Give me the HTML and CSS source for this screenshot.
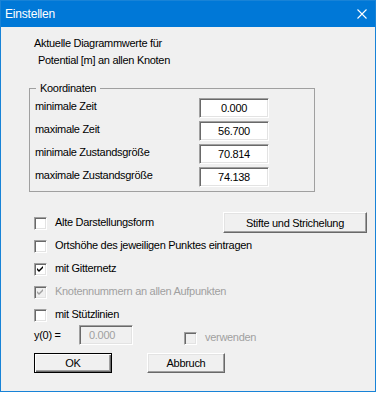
FILE: index.html
```html
<!DOCTYPE html>
<html lang="de">
<head>
    <meta charset="UTF-8">
    <meta name="viewport" content="width=device-width, initial-scale=1.0">
    <title>Einstellen</title>
    <link rel="stylesheet" href="styles.css">
</head>
<body>
    <div class="window">
        <div class="titlebar">
            <span class="title">Einstellen</span>
            <svg class="close" width="10" height="10" viewBox="0 0 10 10">
                <path d="M0.5 0.5 L9.5 9.5 M9.5 0.5 L0.5 9.5" stroke="#fff" stroke-width="1.1" fill="none"/>
            </svg>
        </div>

        <div class="content">
            <p class="intro">Aktuelle Diagrammwerte für</p>
            <p class="intro intro-sub">Potential [m] an allen Knoten</p>

            <fieldset class="group">
                <legend>Koordinaten</legend>
                <div class="field-row">
                    <span class="field-label">minimale Zeit</span>
                    <span class="field-box">0.000</span>
                </div>
                <div class="field-row">
                    <span class="field-label">maximale Zeit</span>
                    <span class="field-box">56.700</span>
                </div>
                <div class="field-row">
                    <span class="field-label">minimale Zustandsgröße</span>
                    <span class="field-box">70.814</span>
                </div>
                <div class="field-row">
                    <span class="field-label">maximale Zustandsgröße</span>
                    <span class="field-box">74.138</span>
                </div>
            </fieldset>

            <div class="options">
                <div class="option-row">
                    <label class="check"><span class="box"></span><span class="check-text">Alte Darstellungsform</span></label>
                    <button type="button" class="btn btn-wide">Stifte und Strichelung</button>
                </div>
                <div class="option-row">
                    <label class="check"><span class="box"></span><span class="check-text">Ortshöhe des jeweiligen Punktes eintragen</span></label>
                </div>
                <div class="option-row">
                    <label class="check">
                        <span class="box">
                            <svg width="9" height="9" viewBox="0 0 9 9"><polygon points="1,3 3,5 7,1 7,3 3,7 1,5" fill="#000"/></svg>
                        </span>
                        <span class="check-text">mit Gitternetz</span>
                    </label>
                </div>
                <div class="option-row">
                    <label class="check disabled">
                        <span class="box">
                            <svg width="9" height="9" viewBox="0 0 9 9"><polygon points="1,3 3,5 7,1 7,3 3,7 1,5" fill="#a0a0a0"/></svg>
                        </span>
                        <span class="check-text">Knotennummern an allen Aufpunkten</span>
                    </label>
                </div>
                <div class="option-row">
                    <label class="check"><span class="box"></span><span class="check-text">mit Stützlinien</span></label>
                </div>
            </div>

            <div class="start-row">
                <span class="start-label">y(0) =</span>
                <span class="field-box field-disabled">0.000</span>
                <label class="check disabled start-check"><span class="box"></span><span class="check-text">verwenden</span></label>
            </div>

            <div class="actions">
                <button type="button" class="btn btn-default">OK</button>
                <button type="button" class="btn">Abbruch</button>
            </div>
        </div>
    </div>
</body>
</html>
```

FILE: styles.css
```css
body {
    margin: 0;
    background-color: #fff;
    font-family: "Liberation Sans", Arial, sans-serif;
    font-size: 11px;
    letter-spacing: -0.3px;
    color: #000;
}

.window {
    width: 376px;
    height: 392px;
    box-sizing: border-box;
    border: 1px solid #1883d7;
    background-color: #f0f0f0;
}

.titlebar {
    height: 26px;
    background-color: #0078d7;
    display: flex;
    align-items: center;
    justify-content: space-between;
    padding: 0 8px 0 4px;
    color: #fff;
}

.title {
    font-size: 12px;
    letter-spacing: -0.2px;
    margin-top: -1px;
}

.close {
    display: block;
    margin-top: -1px;
}

.content {
    padding: 8px 8px 0 33px;
}

.intro {
    margin: 0;
    line-height: 17px;
}

.intro-sub {
    padding-left: 4px;
}

/* group box */
.group {
    box-sizing: border-box;
    width: 286px;
    margin: 12px 0 0 -5px;
    padding: 2px 5px 4px;
    border: 1px solid #a0a0a0;
    min-width: 0;
}

.group legend {
    margin-left: 1px;
    padding: 0 4px;
    line-height: 15px;
}

.field-row {
    display: grid;
    grid-template-columns: 164px 70px;
    align-items: start;
}

.field-row + .field-row {
    margin-top: 3px;
}

.field-label {
    line-height: 17px;
}

.field-box {
    display: block;
    box-sizing: border-box;
    height: 20px;
    line-height: 18px;
    text-align: center;
    background-color: #fff;
    border: 1px solid;
    border-color: #a0a0a0 #fff #fff #a0a0a0;
    box-shadow: inset 1px 1px #696969, inset -1px -1px #e3e3e3;
}

/* checkboxes */
.options {
    margin-top: 20px;
}

.option-row {
    display: flex;
    align-items: center;
    height: 23px;
}

.check {
    display: flex;
    align-items: center;
    gap: 8px;
}

.check-text {
    line-height: 13px;
    padding-bottom: 2px;
}

.box {
    width: 13px;
    height: 13px;
    box-sizing: border-box;
    padding: 1px;
    background-color: #fff;
    border: 1px solid;
    border-color: #a0a0a0 #fff #fff #a0a0a0;
    box-shadow: inset 1px 1px #696969, inset -1px -1px #e3e3e3;
}

.box svg {
    display: block;
}

.check.disabled {
    color: #a0a0a0;
}

.check.disabled .box {
    background-color: #f0f0f0;
}

/* buttons */
.btn {
    box-sizing: border-box;
    height: 20px;
    width: 78px;
    padding: 0;
    font-family: inherit;
    font-size: 11px;
    letter-spacing: -0.3px;
    color: #000;
    background-color: #f0f0f0;
    border: 1px solid;
    border-color: #fff #696969 #696969 #fff;
    box-shadow: inset -1px -1px #a0a0a0, inset 1px 1px #e3e3e3;
}

.btn-wide {
    width: 144px;
    height: 21px;
    margin-left: auto;
    align-self: flex-start;
}

.btn-default {
    border-color: #000;
    box-shadow: inset 1px 1px #fff, inset -1px -1px #696969, inset -2px -2px #a0a0a0;
}

/* y(0) row */
.start-row {
    display: flex;
    align-items: flex-start;
    height: 20px;
    margin-top: -2px;
}

.start-label {
    width: 45px;
    line-height: 20px;
}

.field-disabled {
    width: 54px;
    text-align: left;
    padding-left: 9px;
    color: #a0a0a0;
    background-color: #f0f0f0;
}

.start-check {
    margin: 6px 0 0 51px;
}

.actions {
    display: flex;
    gap: 35px;
    margin-top: 8px;
}
```
